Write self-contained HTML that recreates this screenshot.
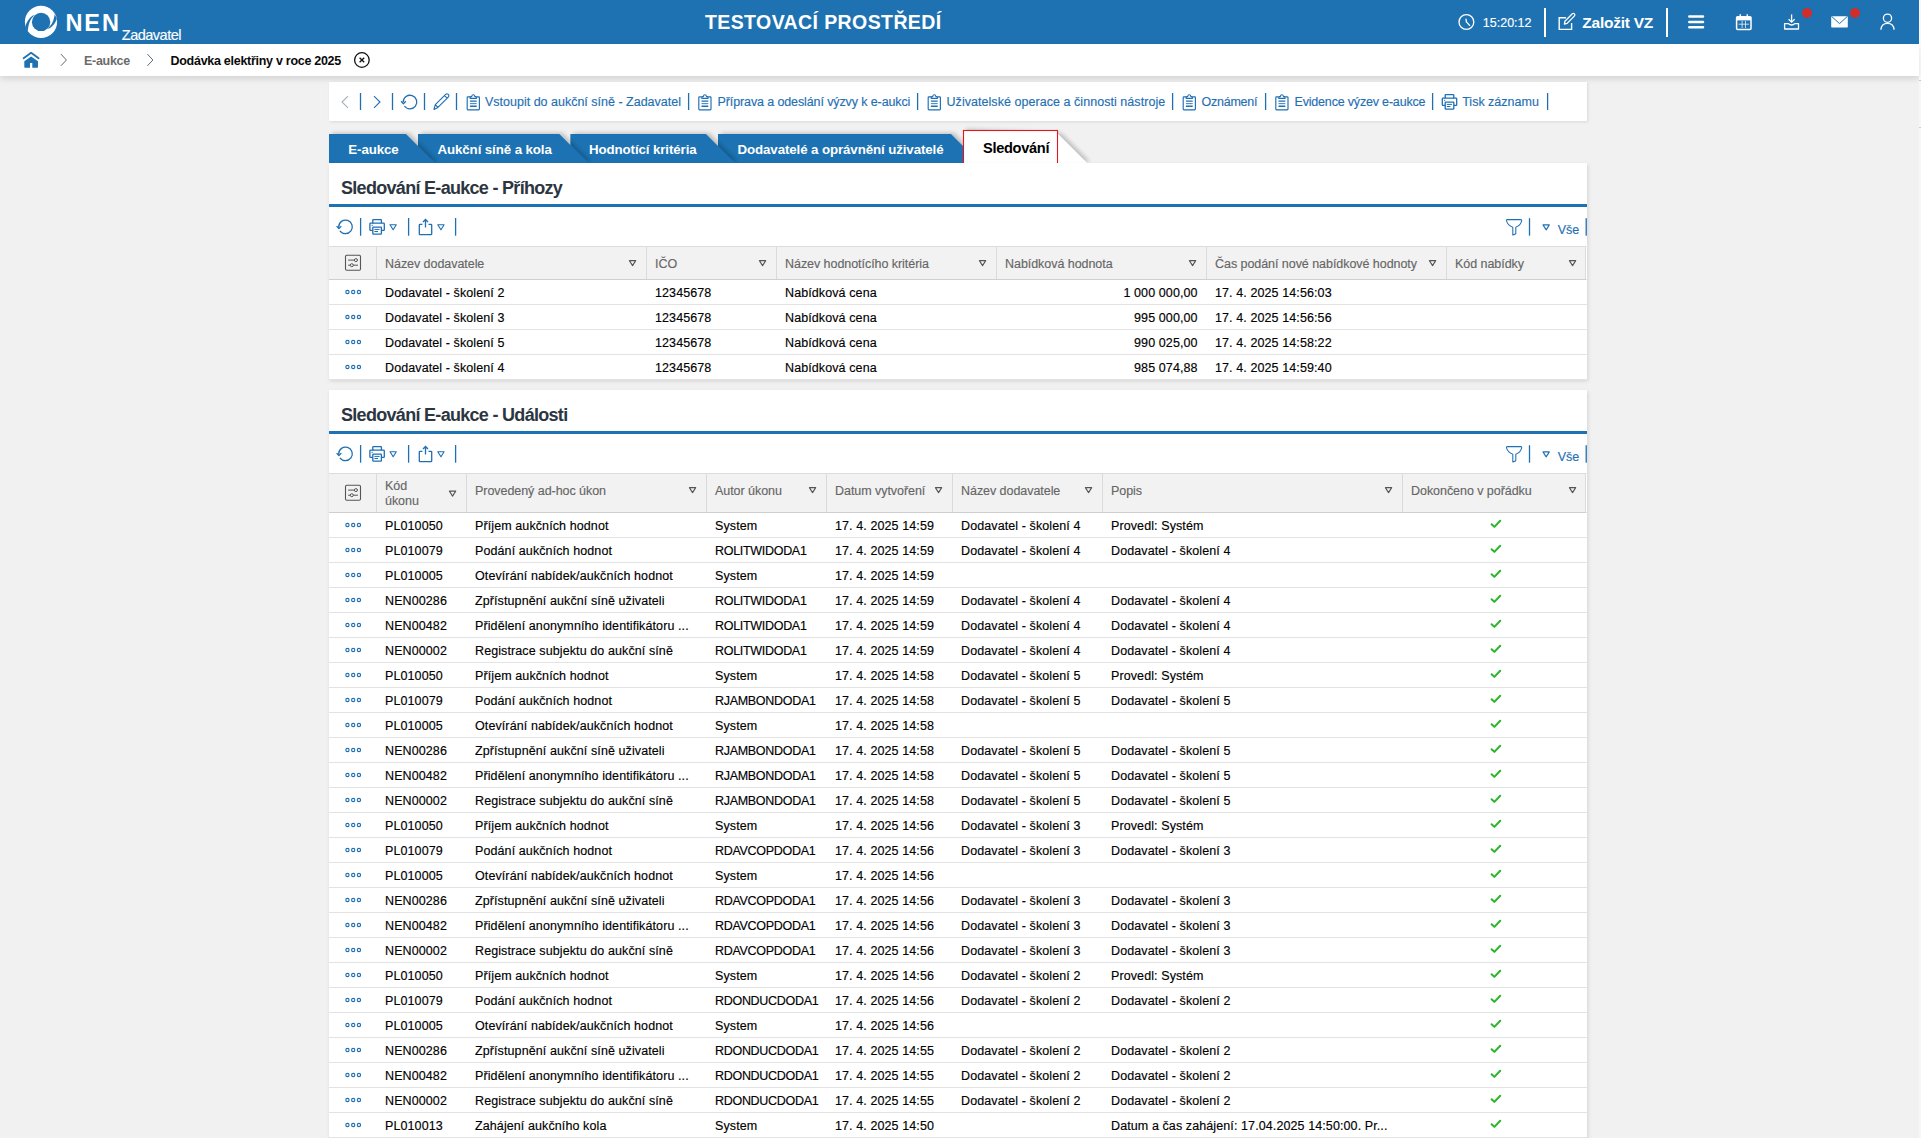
<!DOCTYPE html><html><head><meta charset='utf-8'><title>NEN</title><style>
*{box-sizing:border-box;margin:0;padding:0}
html,body{width:1921px;height:1138px;overflow:hidden;background:#f1f1f1;font-family:"Liberation Sans",sans-serif;}
.a{position:absolute}
.t{position:absolute;white-space:nowrap}
.n{-webkit-text-stroke:0.15px currentColor}
svg{position:absolute;overflow:visible}
</style></head><body>
<div class="a" style="left:0;top:0;width:1919px;height:44px;background:#1e72b2"></div>
<div class="a" style="left:1919px;top:0;width:2px;height:1138px;background:#f7f7f7"></div>
<div class="a" style="left:1919px;top:44px;width:2px;height:37px;background:#fdfdfd;border-bottom:1px solid #cfcfcf"></div>
<div class="a" style="left:1919px;top:127px;width:2px;height:1px;background:#cfcfcf"></div>
<svg style="left:0;top:0" width="70" height="44" viewBox="0 0 70 44">
<circle cx="41" cy="21.9" r="16.1" fill="#fff"/>
<path d="M25.2 27.2 C 27 20, 31 16.5, 34 14.8 L 33.2 16.6 C 30.5 19, 28.3 24, 27.8 31.6 Z" fill="#1e72b2"/>
<path d="M56.9 18.4 C 55 24.5, 51 27.5, 48 29 L 48.8 27.2 C 51.5 25, 53.9 21, 54.6 14.2 Z" fill="#1e72b2"/>
<circle cx="41.1" cy="21.9" r="9.2" fill="#1e72b2"/>
</svg>
<div class="t" style="left:65.5px;top:9px;font-size:23.5px;line-height:28px;font-weight:bold;color:#fff;letter-spacing:1.9px;">NEN</div>
<div class="t n" style="left:121.8px;top:27px;font-size:14.5px;line-height:17px;font-weight:normal;color:#fff;letter-spacing:-0.5px;">Zadavatel</div>
<div class="t" style="left:705px;top:11px;font-size:19.5px;line-height:23px;font-weight:bold;color:#fff;letter-spacing:0.4px;">TESTOVACÍ PROSTŘEDÍ</div>
<svg style="left:1450px;top:0" width="470" height="44" viewBox="1450 0 470 44" fill="none" stroke="#ffffff">
<circle cx="1466.4" cy="22" r="7.4" stroke-width="1.3"/>
<path d="M1466 19.2 L1466.4 21.9 L1469.6 25.4" stroke-width="1.3" stroke-linecap="round" stroke-linejoin="round"/>
<rect x="1544" y="8" width="2" height="29" fill="#ffffff" stroke="none"/>
<path d="M1566 17.8 H1559.2 V29.4 H1571.6 V23" stroke-width="1.4"/>
<path d="M1564.4 24 L1564.9 21.2 L1572.3 13.8 Q1573.4 12.9 1574.4 13.9 Q1575.3 14.9 1574.5 15.9 L1567.1 23.4 Z" stroke-width="1.3" stroke-linejoin="round"/>
<rect x="1666" y="8" width="2" height="29" fill="#ffffff" stroke="none"/>
<path d="M1689.3 16.6 H1703 M1689.3 21.9 H1703 M1689.3 27.2 H1703" stroke-width="2.5" stroke-linecap="round"/>
<rect x="1736.6" y="16.8" width="14.4" height="12.6" rx="1" stroke-width="1.5"/>
<rect x="1736.6" y="16.8" width="14.4" height="3.6" fill="#ffffff" stroke="none"/>
<path d="M1740.3 14.2 V18 M1747.3 14.2 V18" stroke-width="1.5"/>
<path d="M1738.6 24.2 H1749 M1742.1 21 V28 M1745.5 21 V28" stroke-width="0.8" opacity="0.9"/>
<path d="M1791.6 14.4 V22" stroke-width="1.3"/>
<path d="M1788.6 19.3 L1791.6 22.2 L1794.6 19.3" stroke-width="1.3"/>
<path d="M1784.6 23.6 H1788.2 Q1791.6 26.4 1795 23.6 H1798.5 V29 H1784.6 Z" stroke-width="1.3" stroke-linejoin="round"/>
<circle cx="1807" cy="13" r="5" fill="#d12d2a" stroke="none"/>
<rect x="1831.2" y="16.2" width="16.6" height="11.4" rx="1.2" fill="#ffffff" stroke="none"/>
<path d="M1831.8 16.6 L1839.5 23.6 L1847.2 16.6" stroke="#1e72b2" stroke-width="1"/>
<circle cx="1855" cy="13" r="5" fill="#d12d2a" stroke="none"/>
<circle cx="1887.5" cy="18.2" r="4.1" stroke-width="1.3"/>
<path d="M1880.9 29.8 Q1881.3 23.3 1887.5 23.3 Q1893.7 23.3 1894.1 29.8" stroke-width="1.3"/>
</svg>
<div class="t n" style="left:1482.8px;top:16px;font-size:12.5px;line-height:15px;font-weight:normal;color:#fff;">15:20:12</div>
<div class="t" style="left:1582.3px;top:13px;font-size:15.5px;line-height:19px;font-weight:bold;color:#fff;letter-spacing:-0.25px;">Založit VZ</div>
<div class="a" style="left:0;top:44px;width:1919px;height:32px;background:#fff;box-shadow:0 3px 6px rgba(0,0,0,0.12)"></div>
<svg style="left:0;top:44px" width="400" height="32" viewBox="0 44 400 32">
<path d="M23.6 58.3 L31.1 52.8 L38.6 58.3" fill="none" stroke="#1e72b2" stroke-width="1.8" stroke-linecap="round" stroke-linejoin="round"/>
<path d="M24.3 61.3 L31.1 56.4 L38 61.3 V67.1 Q38 67.8 37.3 67.8 H32.3 V62.9 H30 V67.8 H25 Q24.3 67.8 24.3 67.1 Z" fill="#1e72b2"/>
<path d="M60.9 54.1 L66.4 60 L60.9 65.8" fill="none" stroke="#5a6a78" stroke-width="1"/>
<path d="M147.4 54.1 L152.9 60 L147.4 65.8" fill="none" stroke="#5a6a78" stroke-width="1"/>
<circle cx="361.9" cy="60" r="7.3" fill="none" stroke="#111" stroke-width="1.3"/>
<path d="M359.6 57.7 L364.2 62.3 M364.2 57.7 L359.6 62.3" stroke="#111" stroke-width="1.3"/>
</svg>
<div class="t" style="left:84px;top:54px;font-size:12.5px;line-height:15px;font-weight:bold;color:#6b6b6b;letter-spacing:-0.3px;">E-aukce</div>
<div class="t" style="left:170.5px;top:54px;font-size:12.5px;line-height:15px;font-weight:bold;color:#0a0a0a;letter-spacing:-0.28px;">Dodávka elektřiny v roce 2025</div>
<div class="a" style="left:329px;top:82px;width:1258px;height:39px;background:#fff;box-shadow:1px 1px 3px rgba(0,0,0,0.10)"></div>
<svg style="left:329px;top:82px" width="1258" height="39" viewBox="329 82 1258 39" fill="none" stroke="#1f6fb3">
<path d="M348 96.2 L342 102 L348 107.8" stroke="#a7b0b8" stroke-width="1.1"/>
<path d="M374 96.2 L380 102 L374 107.8" stroke-width="1.1"/>
<rect x="359.85" y="93" width="1.3" height="17" fill="#1f6fb3" stroke="none"/>
<rect x="391.85" y="93" width="1.3" height="17" fill="#1f6fb3" stroke="none"/>
<rect x="423.85" y="93" width="1.3" height="17" fill="#1f6fb3" stroke="none"/>
<rect x="455.85" y="93" width="1.3" height="17" fill="#1f6fb3" stroke="none"/>
<rect x="687.95" y="93" width="1.3" height="17" fill="#1f6fb3" stroke="none"/>
<rect x="916.95" y="93" width="1.3" height="17" fill="#1f6fb3" stroke="none"/>
<rect x="1171.9499999999998" y="93" width="1.3" height="17" fill="#1f6fb3" stroke="none"/>
<rect x="1264.9499999999998" y="93" width="1.3" height="17" fill="#1f6fb3" stroke="none"/>
<rect x="1431.9499999999998" y="93" width="1.3" height="17" fill="#1f6fb3" stroke="none"/>
<rect x="1546.9499999999998" y="93" width="1.3" height="17" fill="#1f6fb3" stroke="none"/>
<path d="M403.2 102.1 A6.8 6.8 0 1 1 404.43 106" stroke-width="1.3"/>
<path d="M401.1 101.3 L403.4 103.7 L405.8 101.3" stroke-width="1.3" stroke-linejoin="round"/>
<path d="M434 109.4 L435.3 104.6 L445.9 94.2 Q447.1 93.2 448.3 94.4 Q449.4 95.6 448.5 96.8 L437.9 107.4 Z M435.3 104.6 L437.9 107.4 M444.6 95.6 L447.1 98.1" stroke-width="1.15" stroke-linejoin="round"/>
<g transform="translate(466.6 94.2)">
<path d="M3.4 2.7 H1.3 Q0.6 2.7 0.6 3.4 V14.9 Q0.6 15.6 1.3 15.6 H12.1 Q12.8 15.6 12.8 14.9 V3.4 Q12.8 2.7 12.1 2.7 H10" fill="none" stroke-width="1.15"/>
<path d="M3.6 4.2 V2.9 Q3.6 2.4 4.1 2.4 H5.1 Q5.3 0.6 6.7 0.6 Q8.1 0.6 8.3 2.4 H9.3 Q9.8 2.4 9.8 2.9 V4.2 Z" fill="none" stroke-width="1.1" stroke-linejoin="round"/>
<path d="M3.3 6.9 H10.1 M3.3 12.0 H10.1" stroke-width="1.4"/><path d="M3.3 9.45 H10.1" stroke-width="0.9"/>
</g>
<g transform="translate(698.2 94.2)">
<path d="M3.4 2.7 H1.3 Q0.6 2.7 0.6 3.4 V14.9 Q0.6 15.6 1.3 15.6 H12.1 Q12.8 15.6 12.8 14.9 V3.4 Q12.8 2.7 12.1 2.7 H10" fill="none" stroke-width="1.15"/>
<path d="M3.6 4.2 V2.9 Q3.6 2.4 4.1 2.4 H5.1 Q5.3 0.6 6.7 0.6 Q8.1 0.6 8.3 2.4 H9.3 Q9.8 2.4 9.8 2.9 V4.2 Z" fill="none" stroke-width="1.1" stroke-linejoin="round"/>
<path d="M3.3 6.9 H10.1 M3.3 12.0 H10.1" stroke-width="1.4"/><path d="M3.3 9.45 H10.1" stroke-width="0.9"/>
</g>
<g transform="translate(927.6 94.2)">
<path d="M3.4 2.7 H1.3 Q0.6 2.7 0.6 3.4 V14.9 Q0.6 15.6 1.3 15.6 H12.1 Q12.8 15.6 12.8 14.9 V3.4 Q12.8 2.7 12.1 2.7 H10" fill="none" stroke-width="1.15"/>
<path d="M3.6 4.2 V2.9 Q3.6 2.4 4.1 2.4 H5.1 Q5.3 0.6 6.7 0.6 Q8.1 0.6 8.3 2.4 H9.3 Q9.8 2.4 9.8 2.9 V4.2 Z" fill="none" stroke-width="1.1" stroke-linejoin="round"/>
<path d="M3.3 6.9 H10.1 M3.3 12.0 H10.1" stroke-width="1.4"/><path d="M3.3 9.45 H10.1" stroke-width="0.9"/>
</g>
<g transform="translate(1182.6 94.2)">
<path d="M3.4 2.7 H1.3 Q0.6 2.7 0.6 3.4 V14.9 Q0.6 15.6 1.3 15.6 H12.1 Q12.8 15.6 12.8 14.9 V3.4 Q12.8 2.7 12.1 2.7 H10" fill="none" stroke-width="1.15"/>
<path d="M3.6 4.2 V2.9 Q3.6 2.4 4.1 2.4 H5.1 Q5.3 0.6 6.7 0.6 Q8.1 0.6 8.3 2.4 H9.3 Q9.8 2.4 9.8 2.9 V4.2 Z" fill="none" stroke-width="1.1" stroke-linejoin="round"/>
<path d="M3.3 6.9 H10.1 M3.3 12.0 H10.1" stroke-width="1.4"/><path d="M3.3 9.45 H10.1" stroke-width="0.9"/>
</g>
<g transform="translate(1275.2 94.2)">
<path d="M3.4 2.7 H1.3 Q0.6 2.7 0.6 3.4 V14.9 Q0.6 15.6 1.3 15.6 H12.1 Q12.8 15.6 12.8 14.9 V3.4 Q12.8 2.7 12.1 2.7 H10" fill="none" stroke-width="1.15"/>
<path d="M3.6 4.2 V2.9 Q3.6 2.4 4.1 2.4 H5.1 Q5.3 0.6 6.7 0.6 Q8.1 0.6 8.3 2.4 H9.3 Q9.8 2.4 9.8 2.9 V4.2 Z" fill="none" stroke-width="1.1" stroke-linejoin="round"/>
<path d="M3.3 6.9 H10.1 M3.3 12.0 H10.1" stroke-width="1.4"/><path d="M3.3 9.45 H10.1" stroke-width="0.9"/>
</g>
<g transform="translate(1441.6 94.0)">
<path d="M3.6 4.2 V1.2 Q3.6 0.6 4.2 0.6 H11.6 Q12.2 0.6 12.2 1.2 V4.2" fill="none" stroke-width="1.3"/>
<path d="M3.4 11.4 H1.4 Q0.7 11.4 0.7 10.7 V4.9 Q0.7 4.2 1.4 4.2 H14.4 Q15.1 4.2 15.1 4.9 V10.7 Q15.1 11.4 14.4 11.4 H12.4" fill="none" stroke-width="1.3"/>
<rect x="3.6" y="8.2" width="8.6" height="7" rx="0.6" fill="none" stroke-width="1.3"/>
<path d="M5.2 10.4 H10.4 M5.2 12.5 H8.8 M2.4 6.3 H3.6" stroke-width="1"/>
</g>
</svg>
<div class="t n" style="left:485px;top:95px;font-size:12.5px;line-height:15px;font-weight:normal;color:#1f6fb3;">Vstoupit do aukční síně - Zadavatel</div>
<div class="t n" style="left:717.5px;top:95px;font-size:12.5px;line-height:15px;font-weight:normal;color:#1f6fb3;letter-spacing:-0.11px;">Příprava a odeslání výzvy k e-aukci</div>
<div class="t n" style="left:946.5px;top:95px;font-size:12.5px;line-height:15px;font-weight:normal;color:#1f6fb3;letter-spacing:0.05px;">Uživatelské operace a činnosti nástroje</div>
<div class="t n" style="left:1201.5px;top:95px;font-size:12.5px;line-height:15px;font-weight:normal;color:#1f6fb3;letter-spacing:-0.25px;">Oznámení</div>
<div class="t n" style="left:1294.5px;top:95px;font-size:12.5px;line-height:15px;font-weight:normal;color:#1f6fb3;letter-spacing:-0.18px;">Evidence výzev e-aukce</div>
<div class="t n" style="left:1462.2px;top:95px;font-size:12.5px;line-height:15px;font-weight:normal;color:#1f6fb3;">Tisk záznamu</div>
<svg style="left:320px;top:120px" width="800" height="50" viewBox="320 120 800 50">
<defs><filter id="sh" x="-10%" y="-30%" width="130%" height="160%"><feGaussianBlur in="SourceAlpha" stdDeviation="2.2"/><feOffset dx="2.5" dy="-0.6"/><feComponentTransfer><feFuncA type="linear" slope="0.22"/></feComponentTransfer><feMerge><feMergeNode/><feMergeNode in="SourceGraphic"/></feMerge></filter></defs>
<polygon points="963,130 1058,134 1087,163 963,163" fill="#fff" filter="url(#sh)"/>
<polygon points="718,134 951,134 980,163 718,163" fill="#1e72b2" filter="url(#sh)"/>
<polygon points="570.4,134 706,134 735,163 570.4,163" fill="#1e72b2" filter="url(#sh)"/>
<polygon points="418,134 559.4,134 588.4,163 418,163" fill="#1e72b2" filter="url(#sh)"/>
<polygon points="329,134 406,134 435,163 329,163" fill="#1e72b2" filter="url(#sh)"/>
<rect x="963.5" y="130.5" width="94" height="33.2" fill="#fff" stroke="#e3161f" stroke-width="1.1"/>
</svg>
<div class="t" style="left:348.3px;top:142px;font-size:13.3px;line-height:16px;font-weight:bold;color:#fff;letter-spacing:-0.1px;">E-aukce</div>
<div class="t" style="left:437.5px;top:142px;font-size:13.3px;line-height:16px;font-weight:bold;color:#fff;letter-spacing:-0.1px;">Aukční síně a kola</div>
<div class="t" style="left:589px;top:142px;font-size:13.3px;line-height:16px;font-weight:bold;color:#fff;letter-spacing:-0.1px;">Hodnotící kritéria</div>
<div class="t" style="left:737.5px;top:142px;font-size:13.3px;line-height:16px;font-weight:bold;color:#fff;letter-spacing:-0.1px;">Dodavatelé a oprávnění uživatelé</div>
<div class="t" style="left:983px;top:139px;font-size:14.6px;line-height:18px;font-weight:bold;color:#000;letter-spacing:-0.3px;">Sledování</div>
<div class="a" style="left:329px;top:163px;width:1258px;height:216px;background:#fff;box-shadow:1px 2px 4px rgba(0,0,0,0.13)"></div>
<div class="t" style="left:341px;top:177px;font-size:18px;line-height:22px;font-weight:bold;color:#2b3641;letter-spacing:-0.7px;">Sledování E-aukce - Příhozy</div>
<div class="a" style="left:329px;top:204px;width:1258px;height:3px;background:#1e72b2"></div>
<div class="a" style="left:329px;top:246px;width:1258px;height:34px;background:#f2f2f2;border-top:1px solid #dcdcdc;border-bottom:1px solid #cfcfcf;border-right:1px solid #fff"></div>
<div class="a" style="left:1585px;top:247px;width:1px;height:32px;background:#dcdcdc"></div>
<svg style="left:329px;top:163px" width="1258" height="216" viewBox="329 163 1258 216" fill="none" stroke="#1f6fb3">
<path d="M338.7 226.9 A6.8 6.8 0 1 1 339.93 230.8" stroke-width="1.3"/>
<path d="M336.6 226.1 L338.9 228.5 L341.3 226.1" stroke-width="1.3" stroke-linejoin="round"/>
<rect x="359.95000000000005" y="218" width="1.3" height="17.7" fill="#1f6fb3" stroke="none"/>
<rect x="407.95000000000005" y="218" width="1.3" height="17.7" fill="#1f6fb3" stroke="none"/>
<rect x="454.95000000000005" y="218" width="1.3" height="17.7" fill="#1f6fb3" stroke="none"/>
<g transform="translate(369.2 219)">
<path d="M3.6 4.2 V1.2 Q3.6 0.6 4.2 0.6 H11.6 Q12.2 0.6 12.2 1.2 V4.2" fill="none" stroke-width="1.3"/>
<path d="M3.4 11.4 H1.4 Q0.7 11.4 0.7 10.7 V4.9 Q0.7 4.2 1.4 4.2 H14.4 Q15.1 4.2 15.1 4.9 V10.7 Q15.1 11.4 14.4 11.4 H12.4" fill="none" stroke-width="1.3"/>
<rect x="3.6" y="8.2" width="8.6" height="7" rx="0.6" fill="none" stroke-width="1.3"/>
<path d="M5.2 10.4 H10.4 M5.2 12.5 H8.8 M2.4 6.3 H3.6" stroke-width="1"/>
</g>
<path d="M390.0 224.79999999999998 H396.29999999999995 L393.15 229.79999999999998 Z" fill="none" stroke="#1f6fb3" stroke-width="1.1" stroke-linejoin="round"/>
<path d="M422.4 224.3 H420 Q419.3 224.3 419.3 225 V233.9 Q419.3 234.6 420 234.6 H431 Q431.7 234.6 431.7 233.9 V225 Q431.7 224.3 431 224.3 H428.5" stroke-width="1.3"/>
<path d="M425.5 219.6 V227.6 M423 222 L425.5 219.5 L428 222" stroke-width="1.3"/>
<path d="M437.8 224.79999999999998 H444.09999999999997 L440.95 229.79999999999998 Z" fill="none" stroke="#1f6fb3" stroke-width="1.1" stroke-linejoin="round"/>
<path stroke-width="1.05" d="M1507.3 219.6 H1520.8 Q1522 219.6 1521.6 221.2 Q1520.5 225.6 1515.8 227.2 V233.5 Q1515.6 234.3 1512.8 235 V227.2 Q1508 225.6 1506.6 221.2 Q1506.2 219.6 1507.3 219.6 Z" stroke-linejoin="round"/>
<rect x="1528.85" y="218.2" width="1.3" height="17.5" fill="#1f6fb3" stroke="none"/>
<rect x="1585.55" y="218.2" width="1.3" height="17.5" fill="#1f6fb3" stroke="none"/>
<path d="M1543.0 224.9 H1549.3000000000002 L1546.15 229.9 Z" fill="none" stroke="#1f6fb3" stroke-width="1.1" stroke-linejoin="round"/>
<rect x="376" y="247" width="1" height="32" fill="#dadada" stroke="none"/>
<rect x="646" y="247" width="1" height="32" fill="#dadada" stroke="none"/>
<rect x="776" y="247" width="1" height="32" fill="#dadada" stroke="none"/>
<rect x="996" y="247" width="1" height="32" fill="#dadada" stroke="none"/>
<rect x="1206" y="247" width="1" height="32" fill="#dadada" stroke="none"/>
<rect x="1446" y="247" width="1" height="32" fill="#dadada" stroke="none"/>
<rect x="345.5" y="255.2" width="15" height="15" rx="1.2" stroke="#555" stroke-width="1.1"/>
<path d="M348.1 260.09999999999997 H358 M348.1 265.2 H358" stroke="#555" stroke-width="1"/>
<circle cx="355.9" cy="260.09999999999997" r="1.5" fill="#f2f2f2" stroke="#555" stroke-width="1"/>
<circle cx="351.8" cy="265.2" r="1.5" fill="#f2f2f2" stroke="#555" stroke-width="1"/>
<path d="M629.4 260.6 H635.6999999999999 L632.55 265.6 Z" fill="none" stroke="#555" stroke-width="1.1" stroke-linejoin="round"/>
<path d="M759.4 260.6 H765.6999999999999 L762.55 265.6 Z" fill="none" stroke="#555" stroke-width="1.1" stroke-linejoin="round"/>
<path d="M979.4 260.6 H985.6999999999999 L982.55 265.6 Z" fill="none" stroke="#555" stroke-width="1.1" stroke-linejoin="round"/>
<path d="M1189.3999999999999 260.6 H1195.7 L1192.55 265.6 Z" fill="none" stroke="#555" stroke-width="1.1" stroke-linejoin="round"/>
<path d="M1429.3999999999999 260.6 H1435.7 L1432.55 265.6 Z" fill="none" stroke="#555" stroke-width="1.1" stroke-linejoin="round"/>
<path d="M1569.3999999999999 260.6 H1575.7 L1572.55 265.6 Z" fill="none" stroke="#555" stroke-width="1.1" stroke-linejoin="round"/>
<rect x="329" y="304" width="1258" height="1" fill="#e3e3e3" stroke="none"/>
<circle cx="347.45" cy="292" r="1.65" stroke-width="1.1"/>
<circle cx="353.2" cy="292" r="1.65" stroke-width="1.1"/>
<circle cx="358.95" cy="292" r="1.65" stroke-width="1.1"/>
<rect x="329" y="329" width="1258" height="1" fill="#e3e3e3" stroke="none"/>
<circle cx="347.45" cy="317" r="1.65" stroke-width="1.1"/>
<circle cx="353.2" cy="317" r="1.65" stroke-width="1.1"/>
<circle cx="358.95" cy="317" r="1.65" stroke-width="1.1"/>
<rect x="329" y="354" width="1258" height="1" fill="#e3e3e3" stroke="none"/>
<circle cx="347.45" cy="342" r="1.65" stroke-width="1.1"/>
<circle cx="353.2" cy="342" r="1.65" stroke-width="1.1"/>
<circle cx="358.95" cy="342" r="1.65" stroke-width="1.1"/>
<rect x="329" y="379" width="1258" height="1" fill="#e3e3e3" stroke="none"/>
<circle cx="347.45" cy="367" r="1.65" stroke-width="1.1"/>
<circle cx="353.2" cy="367" r="1.65" stroke-width="1.1"/>
<circle cx="358.95" cy="367" r="1.65" stroke-width="1.1"/>
</svg>
<div class="t n" style="left:385px;top:257px;font-size:12.5px;line-height:15px;font-weight:normal;color:#666666;letter-spacing:-0.05px;">Název dodavatele</div>
<div class="t n" style="left:655px;top:257px;font-size:12.5px;line-height:15px;font-weight:normal;color:#666666;letter-spacing:-0.05px;">IČO</div>
<div class="t n" style="left:785px;top:257px;font-size:12.5px;line-height:15px;font-weight:normal;color:#666666;letter-spacing:-0.05px;">Název hodnotícího kritéria</div>
<div class="t n" style="left:1005px;top:257px;font-size:12.5px;line-height:15px;font-weight:normal;color:#666666;letter-spacing:-0.05px;">Nabídková hodnota</div>
<div class="t n" style="left:1215px;top:257px;font-size:12.5px;line-height:15px;font-weight:normal;color:#666666;letter-spacing:-0.05px;">Čas podání nové nabídkové hodnoty</div>
<div class="t n" style="left:1455px;top:257px;font-size:12.5px;line-height:15px;font-weight:normal;color:#666666;letter-spacing:-0.05px;">Kód nabídky</div>
<div class="t n" style="left:1557.7px;top:223px;font-size:12.5px;line-height:15px;font-weight:normal;color:#1f6fb3;">Vše</div>
<div class="t n" style="left:385px;top:286px;font-size:12.5px;line-height:15px;font-weight:normal;color:#000000;letter-spacing:0.1px;">Dodavatel - školení 2</div>
<div class="t n" style="left:655px;top:286px;font-size:12.5px;line-height:15px;font-weight:normal;color:#000000;letter-spacing:0.1px;">12345678</div>
<div class="t n" style="left:785px;top:286px;font-size:12.5px;line-height:15px;font-weight:normal;color:#000000;letter-spacing:0.1px;">Nabídková cena</div>
<div class="t n" style="right:723.4000000000001px;top:286px;font-size:12.5px;line-height:15px;font-weight:normal;color:#000000;letter-spacing:0.1px;">1 000 000,00</div>
<div class="t n" style="left:1215px;top:286px;font-size:12.5px;line-height:15px;font-weight:normal;color:#000000;letter-spacing:0.1px;">17. 4. 2025 14:56:03</div>
<div class="t n" style="left:385px;top:311px;font-size:12.5px;line-height:15px;font-weight:normal;color:#000000;letter-spacing:0.1px;">Dodavatel - školení 3</div>
<div class="t n" style="left:655px;top:311px;font-size:12.5px;line-height:15px;font-weight:normal;color:#000000;letter-spacing:0.1px;">12345678</div>
<div class="t n" style="left:785px;top:311px;font-size:12.5px;line-height:15px;font-weight:normal;color:#000000;letter-spacing:0.1px;">Nabídková cena</div>
<div class="t n" style="right:723.4000000000001px;top:311px;font-size:12.5px;line-height:15px;font-weight:normal;color:#000000;letter-spacing:0.1px;">995 000,00</div>
<div class="t n" style="left:1215px;top:311px;font-size:12.5px;line-height:15px;font-weight:normal;color:#000000;letter-spacing:0.1px;">17. 4. 2025 14:56:56</div>
<div class="t n" style="left:385px;top:336px;font-size:12.5px;line-height:15px;font-weight:normal;color:#000000;letter-spacing:0.1px;">Dodavatel - školení 5</div>
<div class="t n" style="left:655px;top:336px;font-size:12.5px;line-height:15px;font-weight:normal;color:#000000;letter-spacing:0.1px;">12345678</div>
<div class="t n" style="left:785px;top:336px;font-size:12.5px;line-height:15px;font-weight:normal;color:#000000;letter-spacing:0.1px;">Nabídková cena</div>
<div class="t n" style="right:723.4000000000001px;top:336px;font-size:12.5px;line-height:15px;font-weight:normal;color:#000000;letter-spacing:0.1px;">990 025,00</div>
<div class="t n" style="left:1215px;top:336px;font-size:12.5px;line-height:15px;font-weight:normal;color:#000000;letter-spacing:0.1px;">17. 4. 2025 14:58:22</div>
<div class="t n" style="left:385px;top:361px;font-size:12.5px;line-height:15px;font-weight:normal;color:#000000;letter-spacing:0.1px;">Dodavatel - školení 4</div>
<div class="t n" style="left:655px;top:361px;font-size:12.5px;line-height:15px;font-weight:normal;color:#000000;letter-spacing:0.1px;">12345678</div>
<div class="t n" style="left:785px;top:361px;font-size:12.5px;line-height:15px;font-weight:normal;color:#000000;letter-spacing:0.1px;">Nabídková cena</div>
<div class="t n" style="right:723.4000000000001px;top:361px;font-size:12.5px;line-height:15px;font-weight:normal;color:#000000;letter-spacing:0.1px;">985 074,88</div>
<div class="t n" style="left:1215px;top:361px;font-size:12.5px;line-height:15px;font-weight:normal;color:#000000;letter-spacing:0.1px;">17. 4. 2025 14:59:40</div>
<div class="a" style="left:329px;top:390px;width:1258px;height:760px;background:#fff;box-shadow:1px 2px 4px rgba(0,0,0,0.13)"></div>
<div class="t" style="left:341px;top:404px;font-size:18px;line-height:22px;font-weight:bold;color:#2b3641;letter-spacing:-0.7px;">Sledování E-aukce - Události</div>
<div class="a" style="left:329px;top:431px;width:1258px;height:3px;background:#1e72b2"></div>
<div class="a" style="left:329px;top:473px;width:1258px;height:40px;background:#f2f2f2;border-top:1px solid #dcdcdc;border-bottom:1px solid #cfcfcf;border-right:1px solid #fff"></div>
<div class="a" style="left:1585px;top:474px;width:1px;height:38px;background:#dcdcdc"></div>
<svg style="left:329px;top:390px" width="1258" height="760" viewBox="329 390 1258 760" fill="none" stroke="#1f6fb3">
<path d="M338.7 453.9 A6.8 6.8 0 1 1 339.93 457.8" stroke-width="1.3"/>
<path d="M336.6 453.1 L338.9 455.5 L341.3 453.1" stroke-width="1.3" stroke-linejoin="round"/>
<rect x="359.95000000000005" y="445" width="1.3" height="17.7" fill="#1f6fb3" stroke="none"/>
<rect x="407.95000000000005" y="445" width="1.3" height="17.7" fill="#1f6fb3" stroke="none"/>
<rect x="454.95000000000005" y="445" width="1.3" height="17.7" fill="#1f6fb3" stroke="none"/>
<g transform="translate(369.2 446)">
<path d="M3.6 4.2 V1.2 Q3.6 0.6 4.2 0.6 H11.6 Q12.2 0.6 12.2 1.2 V4.2" fill="none" stroke-width="1.3"/>
<path d="M3.4 11.4 H1.4 Q0.7 11.4 0.7 10.7 V4.9 Q0.7 4.2 1.4 4.2 H14.4 Q15.1 4.2 15.1 4.9 V10.7 Q15.1 11.4 14.4 11.4 H12.4" fill="none" stroke-width="1.3"/>
<rect x="3.6" y="8.2" width="8.6" height="7" rx="0.6" fill="none" stroke-width="1.3"/>
<path d="M5.2 10.4 H10.4 M5.2 12.5 H8.8 M2.4 6.3 H3.6" stroke-width="1"/>
</g>
<path d="M390.0 451.8 H396.29999999999995 L393.15 456.8 Z" fill="none" stroke="#1f6fb3" stroke-width="1.1" stroke-linejoin="round"/>
<path d="M422.4 451.3 H420 Q419.3 451.3 419.3 452 V460.9 Q419.3 461.6 420 461.6 H431 Q431.7 461.6 431.7 460.9 V452 Q431.7 451.3 431 451.3 H428.5" stroke-width="1.3"/>
<path d="M425.5 446.6 V454.6 M423 449 L425.5 446.5 L428 449" stroke-width="1.3"/>
<path d="M437.8 451.8 H444.09999999999997 L440.95 456.8 Z" fill="none" stroke="#1f6fb3" stroke-width="1.1" stroke-linejoin="round"/>
<path stroke-width="1.05" d="M1507.3 446.6 H1520.8 Q1522 446.6 1521.6 448.2 Q1520.5 452.6 1515.8 454.2 V460.5 Q1515.6 461.3 1512.8 462 V454.2 Q1508 452.6 1506.6 448.2 Q1506.2 446.6 1507.3 446.6 Z" stroke-linejoin="round"/>
<rect x="1528.85" y="445.2" width="1.3" height="17.5" fill="#1f6fb3" stroke="none"/>
<rect x="1585.55" y="445.2" width="1.3" height="17.5" fill="#1f6fb3" stroke="none"/>
<path d="M1543.0 451.90000000000003 H1549.3000000000002 L1546.15 456.90000000000003 Z" fill="none" stroke="#1f6fb3" stroke-width="1.1" stroke-linejoin="round"/>
<rect x="376" y="474" width="1" height="38" fill="#dadada" stroke="none"/>
<rect x="466" y="474" width="1" height="38" fill="#dadada" stroke="none"/>
<rect x="706" y="474" width="1" height="38" fill="#dadada" stroke="none"/>
<rect x="826" y="474" width="1" height="38" fill="#dadada" stroke="none"/>
<rect x="952" y="474" width="1" height="38" fill="#dadada" stroke="none"/>
<rect x="1102" y="474" width="1" height="38" fill="#dadada" stroke="none"/>
<rect x="1402" y="474" width="1" height="38" fill="#dadada" stroke="none"/>
<rect x="345.5" y="485.2" width="15" height="15" rx="1.2" stroke="#555" stroke-width="1.1"/>
<path d="M348.1 490.09999999999997 H358 M348.1 495.2 H358" stroke="#555" stroke-width="1"/>
<circle cx="355.9" cy="490.09999999999997" r="1.5" fill="#f2f2f2" stroke="#555" stroke-width="1"/>
<circle cx="351.8" cy="495.2" r="1.5" fill="#f2f2f2" stroke="#555" stroke-width="1"/>
<path d="M449.40000000000003 491.1 H455.7 L452.55 496.1 Z" fill="none" stroke="#555" stroke-width="1.1" stroke-linejoin="round"/>
<path d="M689.4 487.6 H695.6999999999999 L692.55 492.6 Z" fill="none" stroke="#555" stroke-width="1.1" stroke-linejoin="round"/>
<path d="M809.4 487.6 H815.6999999999999 L812.55 492.6 Z" fill="none" stroke="#555" stroke-width="1.1" stroke-linejoin="round"/>
<path d="M935.4 487.6 H941.6999999999999 L938.55 492.6 Z" fill="none" stroke="#555" stroke-width="1.1" stroke-linejoin="round"/>
<path d="M1085.3999999999999 487.6 H1091.7 L1088.55 492.6 Z" fill="none" stroke="#555" stroke-width="1.1" stroke-linejoin="round"/>
<path d="M1385.3999999999999 487.6 H1391.7 L1388.55 492.6 Z" fill="none" stroke="#555" stroke-width="1.1" stroke-linejoin="round"/>
<path d="M1569.3999999999999 487.6 H1575.7 L1572.55 492.6 Z" fill="none" stroke="#555" stroke-width="1.1" stroke-linejoin="round"/>
<rect x="329" y="537" width="1258" height="1" fill="#e3e3e3" stroke="none"/>
<circle cx="347.45" cy="525" r="1.65" stroke-width="1.1"/>
<circle cx="353.2" cy="525" r="1.65" stroke-width="1.1"/>
<circle cx="358.95" cy="525" r="1.65" stroke-width="1.1"/>
<path d="M1491.6 524.2 L1494.4 526.9 L1500.2 520.7" stroke="#2cb52c" stroke-width="2" stroke-linecap="round" stroke-linejoin="round"/>
<rect x="329" y="562" width="1258" height="1" fill="#e3e3e3" stroke="none"/>
<circle cx="347.45" cy="550" r="1.65" stroke-width="1.1"/>
<circle cx="353.2" cy="550" r="1.65" stroke-width="1.1"/>
<circle cx="358.95" cy="550" r="1.65" stroke-width="1.1"/>
<path d="M1491.6 549.2 L1494.4 551.9 L1500.2 545.7" stroke="#2cb52c" stroke-width="2" stroke-linecap="round" stroke-linejoin="round"/>
<rect x="329" y="587" width="1258" height="1" fill="#e3e3e3" stroke="none"/>
<circle cx="347.45" cy="575" r="1.65" stroke-width="1.1"/>
<circle cx="353.2" cy="575" r="1.65" stroke-width="1.1"/>
<circle cx="358.95" cy="575" r="1.65" stroke-width="1.1"/>
<path d="M1491.6 574.2 L1494.4 576.9 L1500.2 570.7" stroke="#2cb52c" stroke-width="2" stroke-linecap="round" stroke-linejoin="round"/>
<rect x="329" y="612" width="1258" height="1" fill="#e3e3e3" stroke="none"/>
<circle cx="347.45" cy="600" r="1.65" stroke-width="1.1"/>
<circle cx="353.2" cy="600" r="1.65" stroke-width="1.1"/>
<circle cx="358.95" cy="600" r="1.65" stroke-width="1.1"/>
<path d="M1491.6 599.2 L1494.4 601.9 L1500.2 595.7" stroke="#2cb52c" stroke-width="2" stroke-linecap="round" stroke-linejoin="round"/>
<rect x="329" y="637" width="1258" height="1" fill="#e3e3e3" stroke="none"/>
<circle cx="347.45" cy="625" r="1.65" stroke-width="1.1"/>
<circle cx="353.2" cy="625" r="1.65" stroke-width="1.1"/>
<circle cx="358.95" cy="625" r="1.65" stroke-width="1.1"/>
<path d="M1491.6 624.2 L1494.4 626.9 L1500.2 620.7" stroke="#2cb52c" stroke-width="2" stroke-linecap="round" stroke-linejoin="round"/>
<rect x="329" y="662" width="1258" height="1" fill="#e3e3e3" stroke="none"/>
<circle cx="347.45" cy="650" r="1.65" stroke-width="1.1"/>
<circle cx="353.2" cy="650" r="1.65" stroke-width="1.1"/>
<circle cx="358.95" cy="650" r="1.65" stroke-width="1.1"/>
<path d="M1491.6 649.2 L1494.4 651.9 L1500.2 645.7" stroke="#2cb52c" stroke-width="2" stroke-linecap="round" stroke-linejoin="round"/>
<rect x="329" y="687" width="1258" height="1" fill="#e3e3e3" stroke="none"/>
<circle cx="347.45" cy="675" r="1.65" stroke-width="1.1"/>
<circle cx="353.2" cy="675" r="1.65" stroke-width="1.1"/>
<circle cx="358.95" cy="675" r="1.65" stroke-width="1.1"/>
<path d="M1491.6 674.2 L1494.4 676.9 L1500.2 670.7" stroke="#2cb52c" stroke-width="2" stroke-linecap="round" stroke-linejoin="round"/>
<rect x="329" y="712" width="1258" height="1" fill="#e3e3e3" stroke="none"/>
<circle cx="347.45" cy="700" r="1.65" stroke-width="1.1"/>
<circle cx="353.2" cy="700" r="1.65" stroke-width="1.1"/>
<circle cx="358.95" cy="700" r="1.65" stroke-width="1.1"/>
<path d="M1491.6 699.2 L1494.4 701.9 L1500.2 695.7" stroke="#2cb52c" stroke-width="2" stroke-linecap="round" stroke-linejoin="round"/>
<rect x="329" y="737" width="1258" height="1" fill="#e3e3e3" stroke="none"/>
<circle cx="347.45" cy="725" r="1.65" stroke-width="1.1"/>
<circle cx="353.2" cy="725" r="1.65" stroke-width="1.1"/>
<circle cx="358.95" cy="725" r="1.65" stroke-width="1.1"/>
<path d="M1491.6 724.2 L1494.4 726.9 L1500.2 720.7" stroke="#2cb52c" stroke-width="2" stroke-linecap="round" stroke-linejoin="round"/>
<rect x="329" y="762" width="1258" height="1" fill="#e3e3e3" stroke="none"/>
<circle cx="347.45" cy="750" r="1.65" stroke-width="1.1"/>
<circle cx="353.2" cy="750" r="1.65" stroke-width="1.1"/>
<circle cx="358.95" cy="750" r="1.65" stroke-width="1.1"/>
<path d="M1491.6 749.2 L1494.4 751.9 L1500.2 745.7" stroke="#2cb52c" stroke-width="2" stroke-linecap="round" stroke-linejoin="round"/>
<rect x="329" y="787" width="1258" height="1" fill="#e3e3e3" stroke="none"/>
<circle cx="347.45" cy="775" r="1.65" stroke-width="1.1"/>
<circle cx="353.2" cy="775" r="1.65" stroke-width="1.1"/>
<circle cx="358.95" cy="775" r="1.65" stroke-width="1.1"/>
<path d="M1491.6 774.2 L1494.4 776.9 L1500.2 770.7" stroke="#2cb52c" stroke-width="2" stroke-linecap="round" stroke-linejoin="round"/>
<rect x="329" y="812" width="1258" height="1" fill="#e3e3e3" stroke="none"/>
<circle cx="347.45" cy="800" r="1.65" stroke-width="1.1"/>
<circle cx="353.2" cy="800" r="1.65" stroke-width="1.1"/>
<circle cx="358.95" cy="800" r="1.65" stroke-width="1.1"/>
<path d="M1491.6 799.2 L1494.4 801.9 L1500.2 795.7" stroke="#2cb52c" stroke-width="2" stroke-linecap="round" stroke-linejoin="round"/>
<rect x="329" y="837" width="1258" height="1" fill="#e3e3e3" stroke="none"/>
<circle cx="347.45" cy="825" r="1.65" stroke-width="1.1"/>
<circle cx="353.2" cy="825" r="1.65" stroke-width="1.1"/>
<circle cx="358.95" cy="825" r="1.65" stroke-width="1.1"/>
<path d="M1491.6 824.2 L1494.4 826.9 L1500.2 820.7" stroke="#2cb52c" stroke-width="2" stroke-linecap="round" stroke-linejoin="round"/>
<rect x="329" y="862" width="1258" height="1" fill="#e3e3e3" stroke="none"/>
<circle cx="347.45" cy="850" r="1.65" stroke-width="1.1"/>
<circle cx="353.2" cy="850" r="1.65" stroke-width="1.1"/>
<circle cx="358.95" cy="850" r="1.65" stroke-width="1.1"/>
<path d="M1491.6 849.2 L1494.4 851.9 L1500.2 845.7" stroke="#2cb52c" stroke-width="2" stroke-linecap="round" stroke-linejoin="round"/>
<rect x="329" y="887" width="1258" height="1" fill="#e3e3e3" stroke="none"/>
<circle cx="347.45" cy="875" r="1.65" stroke-width="1.1"/>
<circle cx="353.2" cy="875" r="1.65" stroke-width="1.1"/>
<circle cx="358.95" cy="875" r="1.65" stroke-width="1.1"/>
<path d="M1491.6 874.2 L1494.4 876.9 L1500.2 870.7" stroke="#2cb52c" stroke-width="2" stroke-linecap="round" stroke-linejoin="round"/>
<rect x="329" y="912" width="1258" height="1" fill="#e3e3e3" stroke="none"/>
<circle cx="347.45" cy="900" r="1.65" stroke-width="1.1"/>
<circle cx="353.2" cy="900" r="1.65" stroke-width="1.1"/>
<circle cx="358.95" cy="900" r="1.65" stroke-width="1.1"/>
<path d="M1491.6 899.2 L1494.4 901.9 L1500.2 895.7" stroke="#2cb52c" stroke-width="2" stroke-linecap="round" stroke-linejoin="round"/>
<rect x="329" y="937" width="1258" height="1" fill="#e3e3e3" stroke="none"/>
<circle cx="347.45" cy="925" r="1.65" stroke-width="1.1"/>
<circle cx="353.2" cy="925" r="1.65" stroke-width="1.1"/>
<circle cx="358.95" cy="925" r="1.65" stroke-width="1.1"/>
<path d="M1491.6 924.2 L1494.4 926.9 L1500.2 920.7" stroke="#2cb52c" stroke-width="2" stroke-linecap="round" stroke-linejoin="round"/>
<rect x="329" y="962" width="1258" height="1" fill="#e3e3e3" stroke="none"/>
<circle cx="347.45" cy="950" r="1.65" stroke-width="1.1"/>
<circle cx="353.2" cy="950" r="1.65" stroke-width="1.1"/>
<circle cx="358.95" cy="950" r="1.65" stroke-width="1.1"/>
<path d="M1491.6 949.2 L1494.4 951.9 L1500.2 945.7" stroke="#2cb52c" stroke-width="2" stroke-linecap="round" stroke-linejoin="round"/>
<rect x="329" y="987" width="1258" height="1" fill="#e3e3e3" stroke="none"/>
<circle cx="347.45" cy="975" r="1.65" stroke-width="1.1"/>
<circle cx="353.2" cy="975" r="1.65" stroke-width="1.1"/>
<circle cx="358.95" cy="975" r="1.65" stroke-width="1.1"/>
<path d="M1491.6 974.2 L1494.4 976.9 L1500.2 970.7" stroke="#2cb52c" stroke-width="2" stroke-linecap="round" stroke-linejoin="round"/>
<rect x="329" y="1012" width="1258" height="1" fill="#e3e3e3" stroke="none"/>
<circle cx="347.45" cy="1000" r="1.65" stroke-width="1.1"/>
<circle cx="353.2" cy="1000" r="1.65" stroke-width="1.1"/>
<circle cx="358.95" cy="1000" r="1.65" stroke-width="1.1"/>
<path d="M1491.6 999.2 L1494.4 1001.9 L1500.2 995.7" stroke="#2cb52c" stroke-width="2" stroke-linecap="round" stroke-linejoin="round"/>
<rect x="329" y="1037" width="1258" height="1" fill="#e3e3e3" stroke="none"/>
<circle cx="347.45" cy="1025" r="1.65" stroke-width="1.1"/>
<circle cx="353.2" cy="1025" r="1.65" stroke-width="1.1"/>
<circle cx="358.95" cy="1025" r="1.65" stroke-width="1.1"/>
<path d="M1491.6 1024.2 L1494.4 1026.9 L1500.2 1020.7" stroke="#2cb52c" stroke-width="2" stroke-linecap="round" stroke-linejoin="round"/>
<rect x="329" y="1062" width="1258" height="1" fill="#e3e3e3" stroke="none"/>
<circle cx="347.45" cy="1050" r="1.65" stroke-width="1.1"/>
<circle cx="353.2" cy="1050" r="1.65" stroke-width="1.1"/>
<circle cx="358.95" cy="1050" r="1.65" stroke-width="1.1"/>
<path d="M1491.6 1049.2 L1494.4 1051.9 L1500.2 1045.7" stroke="#2cb52c" stroke-width="2" stroke-linecap="round" stroke-linejoin="round"/>
<rect x="329" y="1087" width="1258" height="1" fill="#e3e3e3" stroke="none"/>
<circle cx="347.45" cy="1075" r="1.65" stroke-width="1.1"/>
<circle cx="353.2" cy="1075" r="1.65" stroke-width="1.1"/>
<circle cx="358.95" cy="1075" r="1.65" stroke-width="1.1"/>
<path d="M1491.6 1074.2 L1494.4 1076.9 L1500.2 1070.7" stroke="#2cb52c" stroke-width="2" stroke-linecap="round" stroke-linejoin="round"/>
<rect x="329" y="1112" width="1258" height="1" fill="#e3e3e3" stroke="none"/>
<circle cx="347.45" cy="1100" r="1.65" stroke-width="1.1"/>
<circle cx="353.2" cy="1100" r="1.65" stroke-width="1.1"/>
<circle cx="358.95" cy="1100" r="1.65" stroke-width="1.1"/>
<path d="M1491.6 1099.2 L1494.4 1101.9 L1500.2 1095.7" stroke="#2cb52c" stroke-width="2" stroke-linecap="round" stroke-linejoin="round"/>
<rect x="329" y="1137" width="1258" height="1" fill="#e3e3e3" stroke="none"/>
<circle cx="347.45" cy="1125" r="1.65" stroke-width="1.1"/>
<circle cx="353.2" cy="1125" r="1.65" stroke-width="1.1"/>
<circle cx="358.95" cy="1125" r="1.65" stroke-width="1.1"/>
<path d="M1491.6 1124.2 L1494.4 1126.9 L1500.2 1120.7" stroke="#2cb52c" stroke-width="2" stroke-linecap="round" stroke-linejoin="round"/>
</svg>
<div class="t n" style="left:385px;top:479px;font-size:12.5px;line-height:15px;font-weight:normal;color:#666666;letter-spacing:-0.05px;">Kód</div>
<div class="t n" style="left:385px;top:494px;font-size:12.5px;line-height:15px;font-weight:normal;color:#666666;letter-spacing:-0.05px;">úkonu</div>
<div class="t n" style="left:475px;top:484px;font-size:12.5px;line-height:15px;font-weight:normal;color:#666666;letter-spacing:-0.05px;">Provedený ad-hoc úkon</div>
<div class="t n" style="left:715px;top:484px;font-size:12.5px;line-height:15px;font-weight:normal;color:#666666;letter-spacing:-0.05px;">Autor úkonu</div>
<div class="t n" style="left:835px;top:484px;font-size:12.5px;line-height:15px;font-weight:normal;color:#666666;letter-spacing:-0.05px;">Datum vytvoření</div>
<div class="t n" style="left:961px;top:484px;font-size:12.5px;line-height:15px;font-weight:normal;color:#666666;letter-spacing:-0.05px;">Název dodavatele</div>
<div class="t n" style="left:1111px;top:484px;font-size:12.5px;line-height:15px;font-weight:normal;color:#666666;letter-spacing:-0.05px;">Popis</div>
<div class="t n" style="left:1411px;top:484px;font-size:12.5px;line-height:15px;font-weight:normal;color:#666666;letter-spacing:-0.05px;">Dokončeno v pořádku</div>
<div class="t n" style="left:1557.7px;top:450px;font-size:12.5px;line-height:15px;font-weight:normal;color:#1f6fb3;">Vše</div>
<div class="t n" style="left:385px;top:519px;font-size:12.5px;line-height:15px;font-weight:normal;color:#000000;letter-spacing:0.1px;">PL010050</div>
<div class="t n" style="left:475px;top:519px;font-size:12.5px;line-height:15px;font-weight:normal;color:#000000;letter-spacing:0.1px;">Příjem aukčních hodnot</div>
<div class="t n" style="left:715px;top:519px;font-size:12.5px;line-height:15px;font-weight:normal;color:#000000;letter-spacing:0.1px;">System</div>
<div class="t n" style="left:835px;top:519px;font-size:12.5px;line-height:15px;font-weight:normal;color:#000000;letter-spacing:0.1px;">17. 4. 2025 14:59</div>
<div class="t n" style="left:961px;top:519px;font-size:12.5px;line-height:15px;font-weight:normal;color:#000000;letter-spacing:0.1px;">Dodavatel - školení 4</div>
<div class="t n" style="left:1111px;top:519px;font-size:12.5px;line-height:15px;font-weight:normal;color:#000000;letter-spacing:0.1px;">Provedl: Systém</div>
<div class="t n" style="left:385px;top:544px;font-size:12.5px;line-height:15px;font-weight:normal;color:#000000;letter-spacing:0.1px;">PL010079</div>
<div class="t n" style="left:475px;top:544px;font-size:12.5px;line-height:15px;font-weight:normal;color:#000000;letter-spacing:0.1px;">Podání aukčních hodnot</div>
<div class="t n" style="left:715px;top:544px;font-size:12.5px;line-height:15px;font-weight:normal;color:#000000;letter-spacing:-0.3px;">ROLITWIDODA1</div>
<div class="t n" style="left:835px;top:544px;font-size:12.5px;line-height:15px;font-weight:normal;color:#000000;letter-spacing:0.1px;">17. 4. 2025 14:59</div>
<div class="t n" style="left:961px;top:544px;font-size:12.5px;line-height:15px;font-weight:normal;color:#000000;letter-spacing:0.1px;">Dodavatel - školení 4</div>
<div class="t n" style="left:1111px;top:544px;font-size:12.5px;line-height:15px;font-weight:normal;color:#000000;letter-spacing:0.1px;">Dodavatel - školení 4</div>
<div class="t n" style="left:385px;top:569px;font-size:12.5px;line-height:15px;font-weight:normal;color:#000000;letter-spacing:0.1px;">PL010005</div>
<div class="t n" style="left:475px;top:569px;font-size:12.5px;line-height:15px;font-weight:normal;color:#000000;letter-spacing:0.1px;">Otevírání nabídek/aukčních hodnot</div>
<div class="t n" style="left:715px;top:569px;font-size:12.5px;line-height:15px;font-weight:normal;color:#000000;letter-spacing:0.1px;">System</div>
<div class="t n" style="left:835px;top:569px;font-size:12.5px;line-height:15px;font-weight:normal;color:#000000;letter-spacing:0.1px;">17. 4. 2025 14:59</div>
<div class="t n" style="left:385px;top:594px;font-size:12.5px;line-height:15px;font-weight:normal;color:#000000;letter-spacing:0.1px;">NEN00286</div>
<div class="t n" style="left:475px;top:594px;font-size:12.5px;line-height:15px;font-weight:normal;color:#000000;letter-spacing:0.1px;">Zpřístupnění aukční síně uživateli</div>
<div class="t n" style="left:715px;top:594px;font-size:12.5px;line-height:15px;font-weight:normal;color:#000000;letter-spacing:-0.3px;">ROLITWIDODA1</div>
<div class="t n" style="left:835px;top:594px;font-size:12.5px;line-height:15px;font-weight:normal;color:#000000;letter-spacing:0.1px;">17. 4. 2025 14:59</div>
<div class="t n" style="left:961px;top:594px;font-size:12.5px;line-height:15px;font-weight:normal;color:#000000;letter-spacing:0.1px;">Dodavatel - školení 4</div>
<div class="t n" style="left:1111px;top:594px;font-size:12.5px;line-height:15px;font-weight:normal;color:#000000;letter-spacing:0.1px;">Dodavatel - školení 4</div>
<div class="t n" style="left:385px;top:619px;font-size:12.5px;line-height:15px;font-weight:normal;color:#000000;letter-spacing:0.1px;">NEN00482</div>
<div class="t n" style="left:475px;top:619px;font-size:12.5px;line-height:15px;font-weight:normal;color:#000000;letter-spacing:0.1px;">Přidělení anonymního identifikátoru ...</div>
<div class="t n" style="left:715px;top:619px;font-size:12.5px;line-height:15px;font-weight:normal;color:#000000;letter-spacing:-0.3px;">ROLITWIDODA1</div>
<div class="t n" style="left:835px;top:619px;font-size:12.5px;line-height:15px;font-weight:normal;color:#000000;letter-spacing:0.1px;">17. 4. 2025 14:59</div>
<div class="t n" style="left:961px;top:619px;font-size:12.5px;line-height:15px;font-weight:normal;color:#000000;letter-spacing:0.1px;">Dodavatel - školení 4</div>
<div class="t n" style="left:1111px;top:619px;font-size:12.5px;line-height:15px;font-weight:normal;color:#000000;letter-spacing:0.1px;">Dodavatel - školení 4</div>
<div class="t n" style="left:385px;top:644px;font-size:12.5px;line-height:15px;font-weight:normal;color:#000000;letter-spacing:0.1px;">NEN00002</div>
<div class="t n" style="left:475px;top:644px;font-size:12.5px;line-height:15px;font-weight:normal;color:#000000;letter-spacing:0.1px;">Registrace subjektu do aukční síně</div>
<div class="t n" style="left:715px;top:644px;font-size:12.5px;line-height:15px;font-weight:normal;color:#000000;letter-spacing:-0.3px;">ROLITWIDODA1</div>
<div class="t n" style="left:835px;top:644px;font-size:12.5px;line-height:15px;font-weight:normal;color:#000000;letter-spacing:0.1px;">17. 4. 2025 14:59</div>
<div class="t n" style="left:961px;top:644px;font-size:12.5px;line-height:15px;font-weight:normal;color:#000000;letter-spacing:0.1px;">Dodavatel - školení 4</div>
<div class="t n" style="left:1111px;top:644px;font-size:12.5px;line-height:15px;font-weight:normal;color:#000000;letter-spacing:0.1px;">Dodavatel - školení 4</div>
<div class="t n" style="left:385px;top:669px;font-size:12.5px;line-height:15px;font-weight:normal;color:#000000;letter-spacing:0.1px;">PL010050</div>
<div class="t n" style="left:475px;top:669px;font-size:12.5px;line-height:15px;font-weight:normal;color:#000000;letter-spacing:0.1px;">Příjem aukčních hodnot</div>
<div class="t n" style="left:715px;top:669px;font-size:12.5px;line-height:15px;font-weight:normal;color:#000000;letter-spacing:0.1px;">System</div>
<div class="t n" style="left:835px;top:669px;font-size:12.5px;line-height:15px;font-weight:normal;color:#000000;letter-spacing:0.1px;">17. 4. 2025 14:58</div>
<div class="t n" style="left:961px;top:669px;font-size:12.5px;line-height:15px;font-weight:normal;color:#000000;letter-spacing:0.1px;">Dodavatel - školení 5</div>
<div class="t n" style="left:1111px;top:669px;font-size:12.5px;line-height:15px;font-weight:normal;color:#000000;letter-spacing:0.1px;">Provedl: Systém</div>
<div class="t n" style="left:385px;top:694px;font-size:12.5px;line-height:15px;font-weight:normal;color:#000000;letter-spacing:0.1px;">PL010079</div>
<div class="t n" style="left:475px;top:694px;font-size:12.5px;line-height:15px;font-weight:normal;color:#000000;letter-spacing:0.1px;">Podání aukčních hodnot</div>
<div class="t n" style="left:715px;top:694px;font-size:12.5px;line-height:15px;font-weight:normal;color:#000000;letter-spacing:-0.3px;">RJAMBONDODA1</div>
<div class="t n" style="left:835px;top:694px;font-size:12.5px;line-height:15px;font-weight:normal;color:#000000;letter-spacing:0.1px;">17. 4. 2025 14:58</div>
<div class="t n" style="left:961px;top:694px;font-size:12.5px;line-height:15px;font-weight:normal;color:#000000;letter-spacing:0.1px;">Dodavatel - školení 5</div>
<div class="t n" style="left:1111px;top:694px;font-size:12.5px;line-height:15px;font-weight:normal;color:#000000;letter-spacing:0.1px;">Dodavatel - školení 5</div>
<div class="t n" style="left:385px;top:719px;font-size:12.5px;line-height:15px;font-weight:normal;color:#000000;letter-spacing:0.1px;">PL010005</div>
<div class="t n" style="left:475px;top:719px;font-size:12.5px;line-height:15px;font-weight:normal;color:#000000;letter-spacing:0.1px;">Otevírání nabídek/aukčních hodnot</div>
<div class="t n" style="left:715px;top:719px;font-size:12.5px;line-height:15px;font-weight:normal;color:#000000;letter-spacing:0.1px;">System</div>
<div class="t n" style="left:835px;top:719px;font-size:12.5px;line-height:15px;font-weight:normal;color:#000000;letter-spacing:0.1px;">17. 4. 2025 14:58</div>
<div class="t n" style="left:385px;top:744px;font-size:12.5px;line-height:15px;font-weight:normal;color:#000000;letter-spacing:0.1px;">NEN00286</div>
<div class="t n" style="left:475px;top:744px;font-size:12.5px;line-height:15px;font-weight:normal;color:#000000;letter-spacing:0.1px;">Zpřístupnění aukční síně uživateli</div>
<div class="t n" style="left:715px;top:744px;font-size:12.5px;line-height:15px;font-weight:normal;color:#000000;letter-spacing:-0.3px;">RJAMBONDODA1</div>
<div class="t n" style="left:835px;top:744px;font-size:12.5px;line-height:15px;font-weight:normal;color:#000000;letter-spacing:0.1px;">17. 4. 2025 14:58</div>
<div class="t n" style="left:961px;top:744px;font-size:12.5px;line-height:15px;font-weight:normal;color:#000000;letter-spacing:0.1px;">Dodavatel - školení 5</div>
<div class="t n" style="left:1111px;top:744px;font-size:12.5px;line-height:15px;font-weight:normal;color:#000000;letter-spacing:0.1px;">Dodavatel - školení 5</div>
<div class="t n" style="left:385px;top:769px;font-size:12.5px;line-height:15px;font-weight:normal;color:#000000;letter-spacing:0.1px;">NEN00482</div>
<div class="t n" style="left:475px;top:769px;font-size:12.5px;line-height:15px;font-weight:normal;color:#000000;letter-spacing:0.1px;">Přidělení anonymního identifikátoru ...</div>
<div class="t n" style="left:715px;top:769px;font-size:12.5px;line-height:15px;font-weight:normal;color:#000000;letter-spacing:-0.3px;">RJAMBONDODA1</div>
<div class="t n" style="left:835px;top:769px;font-size:12.5px;line-height:15px;font-weight:normal;color:#000000;letter-spacing:0.1px;">17. 4. 2025 14:58</div>
<div class="t n" style="left:961px;top:769px;font-size:12.5px;line-height:15px;font-weight:normal;color:#000000;letter-spacing:0.1px;">Dodavatel - školení 5</div>
<div class="t n" style="left:1111px;top:769px;font-size:12.5px;line-height:15px;font-weight:normal;color:#000000;letter-spacing:0.1px;">Dodavatel - školení 5</div>
<div class="t n" style="left:385px;top:794px;font-size:12.5px;line-height:15px;font-weight:normal;color:#000000;letter-spacing:0.1px;">NEN00002</div>
<div class="t n" style="left:475px;top:794px;font-size:12.5px;line-height:15px;font-weight:normal;color:#000000;letter-spacing:0.1px;">Registrace subjektu do aukční síně</div>
<div class="t n" style="left:715px;top:794px;font-size:12.5px;line-height:15px;font-weight:normal;color:#000000;letter-spacing:-0.3px;">RJAMBONDODA1</div>
<div class="t n" style="left:835px;top:794px;font-size:12.5px;line-height:15px;font-weight:normal;color:#000000;letter-spacing:0.1px;">17. 4. 2025 14:58</div>
<div class="t n" style="left:961px;top:794px;font-size:12.5px;line-height:15px;font-weight:normal;color:#000000;letter-spacing:0.1px;">Dodavatel - školení 5</div>
<div class="t n" style="left:1111px;top:794px;font-size:12.5px;line-height:15px;font-weight:normal;color:#000000;letter-spacing:0.1px;">Dodavatel - školení 5</div>
<div class="t n" style="left:385px;top:819px;font-size:12.5px;line-height:15px;font-weight:normal;color:#000000;letter-spacing:0.1px;">PL010050</div>
<div class="t n" style="left:475px;top:819px;font-size:12.5px;line-height:15px;font-weight:normal;color:#000000;letter-spacing:0.1px;">Příjem aukčních hodnot</div>
<div class="t n" style="left:715px;top:819px;font-size:12.5px;line-height:15px;font-weight:normal;color:#000000;letter-spacing:0.1px;">System</div>
<div class="t n" style="left:835px;top:819px;font-size:12.5px;line-height:15px;font-weight:normal;color:#000000;letter-spacing:0.1px;">17. 4. 2025 14:56</div>
<div class="t n" style="left:961px;top:819px;font-size:12.5px;line-height:15px;font-weight:normal;color:#000000;letter-spacing:0.1px;">Dodavatel - školení 3</div>
<div class="t n" style="left:1111px;top:819px;font-size:12.5px;line-height:15px;font-weight:normal;color:#000000;letter-spacing:0.1px;">Provedl: Systém</div>
<div class="t n" style="left:385px;top:844px;font-size:12.5px;line-height:15px;font-weight:normal;color:#000000;letter-spacing:0.1px;">PL010079</div>
<div class="t n" style="left:475px;top:844px;font-size:12.5px;line-height:15px;font-weight:normal;color:#000000;letter-spacing:0.1px;">Podání aukčních hodnot</div>
<div class="t n" style="left:715px;top:844px;font-size:12.5px;line-height:15px;font-weight:normal;color:#000000;letter-spacing:-0.3px;">RDAVCOPDODA1</div>
<div class="t n" style="left:835px;top:844px;font-size:12.5px;line-height:15px;font-weight:normal;color:#000000;letter-spacing:0.1px;">17. 4. 2025 14:56</div>
<div class="t n" style="left:961px;top:844px;font-size:12.5px;line-height:15px;font-weight:normal;color:#000000;letter-spacing:0.1px;">Dodavatel - školení 3</div>
<div class="t n" style="left:1111px;top:844px;font-size:12.5px;line-height:15px;font-weight:normal;color:#000000;letter-spacing:0.1px;">Dodavatel - školení 3</div>
<div class="t n" style="left:385px;top:869px;font-size:12.5px;line-height:15px;font-weight:normal;color:#000000;letter-spacing:0.1px;">PL010005</div>
<div class="t n" style="left:475px;top:869px;font-size:12.5px;line-height:15px;font-weight:normal;color:#000000;letter-spacing:0.1px;">Otevírání nabídek/aukčních hodnot</div>
<div class="t n" style="left:715px;top:869px;font-size:12.5px;line-height:15px;font-weight:normal;color:#000000;letter-spacing:0.1px;">System</div>
<div class="t n" style="left:835px;top:869px;font-size:12.5px;line-height:15px;font-weight:normal;color:#000000;letter-spacing:0.1px;">17. 4. 2025 14:56</div>
<div class="t n" style="left:385px;top:894px;font-size:12.5px;line-height:15px;font-weight:normal;color:#000000;letter-spacing:0.1px;">NEN00286</div>
<div class="t n" style="left:475px;top:894px;font-size:12.5px;line-height:15px;font-weight:normal;color:#000000;letter-spacing:0.1px;">Zpřístupnění aukční síně uživateli</div>
<div class="t n" style="left:715px;top:894px;font-size:12.5px;line-height:15px;font-weight:normal;color:#000000;letter-spacing:-0.3px;">RDAVCOPDODA1</div>
<div class="t n" style="left:835px;top:894px;font-size:12.5px;line-height:15px;font-weight:normal;color:#000000;letter-spacing:0.1px;">17. 4. 2025 14:56</div>
<div class="t n" style="left:961px;top:894px;font-size:12.5px;line-height:15px;font-weight:normal;color:#000000;letter-spacing:0.1px;">Dodavatel - školení 3</div>
<div class="t n" style="left:1111px;top:894px;font-size:12.5px;line-height:15px;font-weight:normal;color:#000000;letter-spacing:0.1px;">Dodavatel - školení 3</div>
<div class="t n" style="left:385px;top:919px;font-size:12.5px;line-height:15px;font-weight:normal;color:#000000;letter-spacing:0.1px;">NEN00482</div>
<div class="t n" style="left:475px;top:919px;font-size:12.5px;line-height:15px;font-weight:normal;color:#000000;letter-spacing:0.1px;">Přidělení anonymního identifikátoru ...</div>
<div class="t n" style="left:715px;top:919px;font-size:12.5px;line-height:15px;font-weight:normal;color:#000000;letter-spacing:-0.3px;">RDAVCOPDODA1</div>
<div class="t n" style="left:835px;top:919px;font-size:12.5px;line-height:15px;font-weight:normal;color:#000000;letter-spacing:0.1px;">17. 4. 2025 14:56</div>
<div class="t n" style="left:961px;top:919px;font-size:12.5px;line-height:15px;font-weight:normal;color:#000000;letter-spacing:0.1px;">Dodavatel - školení 3</div>
<div class="t n" style="left:1111px;top:919px;font-size:12.5px;line-height:15px;font-weight:normal;color:#000000;letter-spacing:0.1px;">Dodavatel - školení 3</div>
<div class="t n" style="left:385px;top:944px;font-size:12.5px;line-height:15px;font-weight:normal;color:#000000;letter-spacing:0.1px;">NEN00002</div>
<div class="t n" style="left:475px;top:944px;font-size:12.5px;line-height:15px;font-weight:normal;color:#000000;letter-spacing:0.1px;">Registrace subjektu do aukční síně</div>
<div class="t n" style="left:715px;top:944px;font-size:12.5px;line-height:15px;font-weight:normal;color:#000000;letter-spacing:-0.3px;">RDAVCOPDODA1</div>
<div class="t n" style="left:835px;top:944px;font-size:12.5px;line-height:15px;font-weight:normal;color:#000000;letter-spacing:0.1px;">17. 4. 2025 14:56</div>
<div class="t n" style="left:961px;top:944px;font-size:12.5px;line-height:15px;font-weight:normal;color:#000000;letter-spacing:0.1px;">Dodavatel - školení 3</div>
<div class="t n" style="left:1111px;top:944px;font-size:12.5px;line-height:15px;font-weight:normal;color:#000000;letter-spacing:0.1px;">Dodavatel - školení 3</div>
<div class="t n" style="left:385px;top:969px;font-size:12.5px;line-height:15px;font-weight:normal;color:#000000;letter-spacing:0.1px;">PL010050</div>
<div class="t n" style="left:475px;top:969px;font-size:12.5px;line-height:15px;font-weight:normal;color:#000000;letter-spacing:0.1px;">Příjem aukčních hodnot</div>
<div class="t n" style="left:715px;top:969px;font-size:12.5px;line-height:15px;font-weight:normal;color:#000000;letter-spacing:0.1px;">System</div>
<div class="t n" style="left:835px;top:969px;font-size:12.5px;line-height:15px;font-weight:normal;color:#000000;letter-spacing:0.1px;">17. 4. 2025 14:56</div>
<div class="t n" style="left:961px;top:969px;font-size:12.5px;line-height:15px;font-weight:normal;color:#000000;letter-spacing:0.1px;">Dodavatel - školení 2</div>
<div class="t n" style="left:1111px;top:969px;font-size:12.5px;line-height:15px;font-weight:normal;color:#000000;letter-spacing:0.1px;">Provedl: Systém</div>
<div class="t n" style="left:385px;top:994px;font-size:12.5px;line-height:15px;font-weight:normal;color:#000000;letter-spacing:0.1px;">PL010079</div>
<div class="t n" style="left:475px;top:994px;font-size:12.5px;line-height:15px;font-weight:normal;color:#000000;letter-spacing:0.1px;">Podání aukčních hodnot</div>
<div class="t n" style="left:715px;top:994px;font-size:12.5px;line-height:15px;font-weight:normal;color:#000000;letter-spacing:-0.3px;">RDONDUCDODA1</div>
<div class="t n" style="left:835px;top:994px;font-size:12.5px;line-height:15px;font-weight:normal;color:#000000;letter-spacing:0.1px;">17. 4. 2025 14:56</div>
<div class="t n" style="left:961px;top:994px;font-size:12.5px;line-height:15px;font-weight:normal;color:#000000;letter-spacing:0.1px;">Dodavatel - školení 2</div>
<div class="t n" style="left:1111px;top:994px;font-size:12.5px;line-height:15px;font-weight:normal;color:#000000;letter-spacing:0.1px;">Dodavatel - školení 2</div>
<div class="t n" style="left:385px;top:1019px;font-size:12.5px;line-height:15px;font-weight:normal;color:#000000;letter-spacing:0.1px;">PL010005</div>
<div class="t n" style="left:475px;top:1019px;font-size:12.5px;line-height:15px;font-weight:normal;color:#000000;letter-spacing:0.1px;">Otevírání nabídek/aukčních hodnot</div>
<div class="t n" style="left:715px;top:1019px;font-size:12.5px;line-height:15px;font-weight:normal;color:#000000;letter-spacing:0.1px;">System</div>
<div class="t n" style="left:835px;top:1019px;font-size:12.5px;line-height:15px;font-weight:normal;color:#000000;letter-spacing:0.1px;">17. 4. 2025 14:56</div>
<div class="t n" style="left:385px;top:1044px;font-size:12.5px;line-height:15px;font-weight:normal;color:#000000;letter-spacing:0.1px;">NEN00286</div>
<div class="t n" style="left:475px;top:1044px;font-size:12.5px;line-height:15px;font-weight:normal;color:#000000;letter-spacing:0.1px;">Zpřístupnění aukční síně uživateli</div>
<div class="t n" style="left:715px;top:1044px;font-size:12.5px;line-height:15px;font-weight:normal;color:#000000;letter-spacing:-0.3px;">RDONDUCDODA1</div>
<div class="t n" style="left:835px;top:1044px;font-size:12.5px;line-height:15px;font-weight:normal;color:#000000;letter-spacing:0.1px;">17. 4. 2025 14:55</div>
<div class="t n" style="left:961px;top:1044px;font-size:12.5px;line-height:15px;font-weight:normal;color:#000000;letter-spacing:0.1px;">Dodavatel - školení 2</div>
<div class="t n" style="left:1111px;top:1044px;font-size:12.5px;line-height:15px;font-weight:normal;color:#000000;letter-spacing:0.1px;">Dodavatel - školení 2</div>
<div class="t n" style="left:385px;top:1069px;font-size:12.5px;line-height:15px;font-weight:normal;color:#000000;letter-spacing:0.1px;">NEN00482</div>
<div class="t n" style="left:475px;top:1069px;font-size:12.5px;line-height:15px;font-weight:normal;color:#000000;letter-spacing:0.1px;">Přidělení anonymního identifikátoru ...</div>
<div class="t n" style="left:715px;top:1069px;font-size:12.5px;line-height:15px;font-weight:normal;color:#000000;letter-spacing:-0.3px;">RDONDUCDODA1</div>
<div class="t n" style="left:835px;top:1069px;font-size:12.5px;line-height:15px;font-weight:normal;color:#000000;letter-spacing:0.1px;">17. 4. 2025 14:55</div>
<div class="t n" style="left:961px;top:1069px;font-size:12.5px;line-height:15px;font-weight:normal;color:#000000;letter-spacing:0.1px;">Dodavatel - školení 2</div>
<div class="t n" style="left:1111px;top:1069px;font-size:12.5px;line-height:15px;font-weight:normal;color:#000000;letter-spacing:0.1px;">Dodavatel - školení 2</div>
<div class="t n" style="left:385px;top:1094px;font-size:12.5px;line-height:15px;font-weight:normal;color:#000000;letter-spacing:0.1px;">NEN00002</div>
<div class="t n" style="left:475px;top:1094px;font-size:12.5px;line-height:15px;font-weight:normal;color:#000000;letter-spacing:0.1px;">Registrace subjektu do aukční síně</div>
<div class="t n" style="left:715px;top:1094px;font-size:12.5px;line-height:15px;font-weight:normal;color:#000000;letter-spacing:-0.3px;">RDONDUCDODA1</div>
<div class="t n" style="left:835px;top:1094px;font-size:12.5px;line-height:15px;font-weight:normal;color:#000000;letter-spacing:0.1px;">17. 4. 2025 14:55</div>
<div class="t n" style="left:961px;top:1094px;font-size:12.5px;line-height:15px;font-weight:normal;color:#000000;letter-spacing:0.1px;">Dodavatel - školení 2</div>
<div class="t n" style="left:1111px;top:1094px;font-size:12.5px;line-height:15px;font-weight:normal;color:#000000;letter-spacing:0.1px;">Dodavatel - školení 2</div>
<div class="t n" style="left:385px;top:1119px;font-size:12.5px;line-height:15px;font-weight:normal;color:#000000;letter-spacing:0.1px;">PL010013</div>
<div class="t n" style="left:475px;top:1119px;font-size:12.5px;line-height:15px;font-weight:normal;color:#000000;letter-spacing:0.1px;">Zahájení aukčního kola</div>
<div class="t n" style="left:715px;top:1119px;font-size:12.5px;line-height:15px;font-weight:normal;color:#000000;letter-spacing:0.1px;">System</div>
<div class="t n" style="left:835px;top:1119px;font-size:12.5px;line-height:15px;font-weight:normal;color:#000000;letter-spacing:0.1px;">17. 4. 2025 14:50</div>
<div class="t n" style="left:1111px;top:1119px;font-size:12.5px;line-height:15px;font-weight:normal;color:#000000;letter-spacing:0.1px;">Datum a čas zahájení: 17.04.2025 14:50:00. Pr...</div>
</body></html>
